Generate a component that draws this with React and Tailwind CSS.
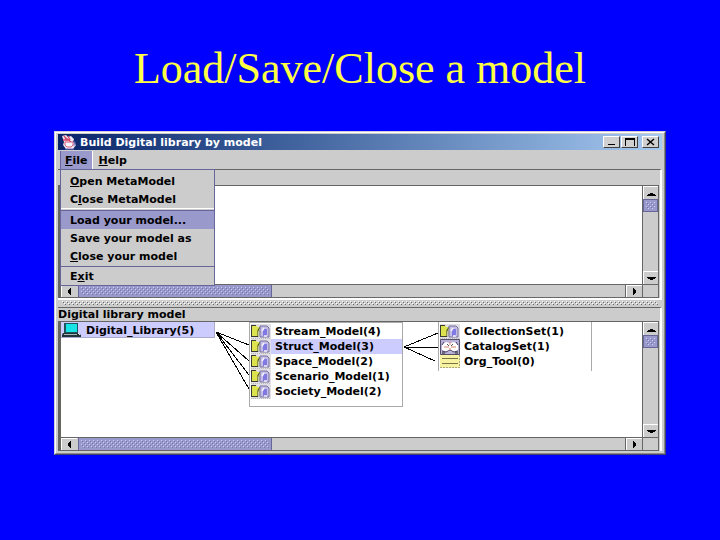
import React, { useState } from 'react';

const menuGroups = [
  [
    { id: 'open-meta', before: '', key: 'O', after: 'pen MetaModel' },
    { id: 'close-meta', before: 'C', key: 'l', after: 'ose MetaModel' },
  ],
  [
    { id: 'load', before: 'Load your model...', key: '', after: '' },
    { id: 'save', before: 'Save your model as', key: '', after: '' },
    { id: 'close', before: '', key: 'C', after: 'lose your model' },
  ],
  [{ id: 'exit', before: 'E', key: 'x', after: 'it' }],
];

const models = ['Stream_Model(4)', 'Struct_Model(3)', 'Space_Model(2)', 'Scenario_Model(1)', 'Society_Model(2)'];

const parts = [
  { name: 'CollectionSet(1)', icon: 'folder' },
  { name: 'CatalogSet(1)', icon: 'catalog' },
  { name: 'Org_Tool(0)', icon: 'note' },
];

const arrows = {
  up: 'M0 7h9v-1h-1v-1h-2v-1h-3v1h-2v1h-1z',
  down: 'M0 3h9v1h-1v1h-2v1h-3v-1h-2v-1h-1z',
  left: 'M6 1v7h-1v-1h-1v-1h-1v-3h1v-1h1v-1z',
  right: 'M3 1v7h1v-1h1v-1h1v-3h-1v-1h-1v-1z',
};

const CupIcon = () => (
  <svg width="16" height="16" viewBox="0 0 16 16" className="shrink-0" aria-hidden="true">
    <path d="M1 2l4-1 2 2 3-1 3 3-1 3 3 3-3 4H5l-3-4 1-3z" fill="#ece6f2" />
    <path d="M3 2l3 4M7 2l2 4M2 6h7M5 4l5 4" stroke="#d7476a" strokeWidth="1.3" fill="none" />
    <path d="M4 8h8v3l-2 2H6l-2-2z" fill="#f7f7ff" stroke="#d85c78" />
    <path d="M12 8h2v3h-2M4 15h9" stroke="#7d78bd" fill="none" />
  </svg>
);

const ComputerIcon = () => (
  <svg width="20" height="14" viewBox="0 0 20 14" className="shrink-0" aria-hidden="true">
    <path d="M2 0h14v10H2z" fill="#20545c" />
    <path d="M4 1h11v8H4z" fill="#18e4e8" />
    <path d="M1 10h15l3 2v2H0v-2z" fill="#22333a" />
    <path d="M2 11.5h13" stroke="#a5b9bb" />
    <path d="M16 10l2 2" stroke="#eee" />
  </svg>
);

const FolderIcon = () => (
  <svg width="20" height="15" viewBox="0 0 20 15" className="shrink-0" aria-hidden="true">
    <path d="M0 0h20v15H0z" fill="#e2e0e4" />
    <path d="M0 12V2l1-1h4l1 2h3v4l-2 5z" fill="#dce34e" />
    <path d="M0 1.500h5M.5 2v10M0 12.500h7V6l3-4" stroke="#3a3a30" fill="none" />
    <path d="M7 8l3-3h2v7H7z" fill="#c8cba8" />
    <path d="M9 2h7l2 2v9H9z" fill="#c4bde6" stroke="#77709c" />
    <path d="M12 5h4v7h-4z" fill="#8179e2" />
    <path d="M11 7l2-3M13 12h3" stroke="#f4f2ff" strokeWidth="1.5" />
    <path d="M0 14.500h20" stroke="#bbb" strokeDasharray="1 1" />
  </svg>
);

const CatalogIcon = () => (
  <svg width="20" height="16" viewBox="0 0 20 16" className="shrink-0" aria-hidden="true">
    <path d="M0 0h20v16H0z" fill="#b9b1d8" />
    <path d="M.5.5h19v15H.5z" fill="none" stroke="#55506a" />
    <path d="M2 5l4-2 4 1 4-1 4 2v6l-4 2-4-1-4 1-4-2z" fill="#fff" />
    <path d="M2 6l2-3M16 3l2 3M2 12l4 1 4-2 4 2 4-1" stroke="#443b68" fill="none" />
    <path d="M4 8h5M11 8h5M10 3v3M10 9v2" stroke="#d9856b" />
    <path d="M7 5l2 2M13 5l-2 2" stroke="#555" />
    <path d="M2 14h3M15 14h3" stroke="#222" />
  </svg>
);

const NoteIcon = () => (
  <svg width="20" height="13" viewBox="0 0 20 13" className="shrink-0" aria-hidden="true">
    <path d="M0 0h20v13H0z" fill="#f6f2a0" />
    <path d="M2 3.500h16M2 8.500h16" stroke="#77734a" />
    <path d="M0 12.500h20M19.500 0v13" stroke="#aaa783" strokeDasharray="2 1" />
  </svg>
);

const icons = { folder: FolderIcon, catalog: CatalogIcon, note: NoteIcon };

const ScrollButton = ({ dir, size }) => (
  <button
    type="button"
    aria-label={`Scroll ${dir}`}
    className={`flex shrink-0 items-center justify-center border-t border-l border-white bg-[#cccccc] ${size}`}
  >
    <svg width="9" height="9" viewBox="0 0 9 9" shapeRendering="crispEdges" aria-hidden="true">
      <path d={arrows[dir]} />
    </svg>
  </button>
);

// Grip texture drawn on thumbs
const Grip = ({ id }) => (
  <svg className="block h-full w-full" shapeRendering="crispEdges" aria-hidden="true">
    <pattern id={id} width="4" height="4" patternUnits="userSpaceOnUse">
      <path d="M0 0h1v1H0zM2 2h1v1H2z" fill="#ccccff" />
      <path d="M1 1h1v1H1zM3 3h1v1H3z" fill="#7777aa" />
    </pattern>
    <rect width="100%" height="100%" fill={`url(#${id})`} />
  </svg>
);

const Divider = () => (
  <div className="border-t-2 border-white px-1 pt-px pb-0.5">
    <svg className="block h-1 w-full" shapeRendering="crispEdges" aria-hidden="true">
      <pattern id="divider" width="4" height="4" patternUnits="userSpaceOnUse">
        <path d="M0 0h1v1H0zM2 2h1v1H2z" fill="#ffffff" />
        <path d="M1 1h1v1H1zM3 3h1v1H3z" fill="#666666" />
      </pattern>
      <rect width="100%" height="100%" fill="url(#divider)" />
    </svg>
  </div>
);

// White canvas with the two scroll bars round it
const ScrollPane = ({ id, children, minHeight }) => (
  <div className="grid grid-cols-[minmax(0,1fr)_17px] border-l-3 border-[#666660] bg-[#cccccc]">
    <div className={`bg-white ${minHeight}`}>{children}</div>
    <div className="flex flex-col border-r border-l border-[#666666]">
      <ScrollButton dir="up" size="h-[13px]" />
      <div className="h-[13px] border border-[#666699] bg-[#9999cc] p-0.5">
        <Grip id={`${id}-v`} />
      </div>
      <div className="flex-1" />
      <ScrollButton dir="down" size="h-[13px]" />
    </div>
    <div className="flex h-[14px] border-y border-[#666666]">
      <ScrollButton dir="left" size="w-4" />
      <div className="ml-px w-1/3 border-r border-l border-[#666699] bg-[#9999cc] px-0.5 py-0.5">
        <Grip id={`${id}-h`} />
      </div>
      <div className="flex-1 border-r border-[#666666]" />
      <ScrollButton dir="right" size="w-4" />
    </div>
    <div className="border border-[#666666]" />
  </div>
);

const TreeRow = ({ icon, label, selected, onClick }) => {
  const Icon = icons[icon];
  return (
    <li className="flex h-[15px] items-center pl-px">
      <Icon />
      <button
        type="button"
        onClick={onClick}
        className={`h-full flex-1 pl-1 text-left ${selected ? 'bg-[#ccccff]' : ''}`}
      >
        {label}
      </button>
    </li>
  );
};

const titleButton =
  'flex h-3 w-[17px] items-center justify-center border border-t-white border-l-white border-r-[#404040] border-b-[#404040] bg-[#d0d0d0]';

const App = () => {
  const [menuOpen, setMenuOpen] = useState(true);
  const [activeItem, setActiveItem] = useState('load');
  const [selected, setSelected] = useState('Struct_Model(3)');

  return (
    <main className="min-h-screen bg-[#0000ff] px-[54px] pt-[45px] pb-10">
      <h1 className="text-center font-['Liberation_Serif',serif] text-[44px] leading-[48px] text-[#ffff44]">
        Load/Save/Close a model
      </h1>

      <div className="mt-[38px] border border-t-[#ccccdd] border-l-[#ccccdd] border-r-[#444466] border-b-[#444466] font-['DejaVu_Sans',sans-serif] text-[11px] leading-[15px] font-bold text-black">
        <div className="border border-t-white border-l-white border-r-[#888888] border-b-[#888888] bg-[#cccccc] px-0.5 pt-px pb-0.5">
          {/* Title bar */}
          <header className="flex h-4 items-center bg-linear-to-r from-[#0a246a] to-[#a6caf0] pr-[3px] pl-[3px] text-white">
            <CupIcon />
            <span className="flex-1 pl-[3px]">Build Digital library by model</span>
            <button type="button" aria-label="Minimize" className={titleButton}>
              <svg width="10" height="8" shapeRendering="crispEdges"><path d="M1 6h7v1H1z" /></svg>
            </button>
            <button type="button" aria-label="Maximize" className={`ml-px ${titleButton}`}>
              <svg width="10" height="8" shapeRendering="crispEdges"><path d="M0 0h10v8H9V2H1v6H0z" /></svg>
            </button>
            <button type="button" aria-label="Close" className={`ml-1 ${titleButton}`}>
              <svg width="10" height="8"><path d="M1 1l7 6M8 1L1 7" stroke="black" strokeWidth="1.500" /></svg>
            </button>
          </header>

          {/* Menu bar */}
          <nav className="relative flex h-[19px] pt-px pl-0.5">
            <button
              type="button"
              onClick={() => setMenuOpen(!menuOpen)}
              className={`border-r border-l border-l-[#666699] border-r-white px-1 ${menuOpen ? 'bg-[#9999cc]' : ''}`}
            >
              <u>F</u>ile
            </button>
            <button type="button" className="px-1.5">
              <u>H</u>elp
            </button>

            {menuOpen && (
              <div className="absolute top-full left-[2px] z-10 w-[155px] border border-[#666699] bg-[#cccccc] pt-0.5">
                {menuGroups.map((group, i) => (
                  <div key={group[0].id} className={i > 0 ? 'mt-px border-t border-[#666699]' : 'border-b border-white'}>
                    {group.map(item => (
                      <button
                        key={item.id}
                        type="button"
                        onMouseEnter={() => setActiveItem(item.id)}
                        className={`block h-[18px] w-full pl-[9px] text-left ${
                          activeItem === item.id ? 'bg-[#9999cc]' : ''
                        }`}
                      >
                        {item.before}
                        <u>{item.key}</u>
                        {item.after}
                      </button>
                    ))}
                  </div>
                ))}
              </div>
            )}
          </nav>

          {/* Meta model pane */}
          <section className="border-t border-r-2 border-t-[#666666] border-r-white pr-px">
            <div className="h-4 border-b border-[#666666]" />
            <ScrollPane id="meta" minHeight="min-h-[98px]" />
          </section>

          <Divider />

          {/* Digital library pane */}
          <section className="border-t border-r-2 border-t-[#666666] border-r-white pr-px">
            <h2 className="h-[14px] border-b border-[#666666] leading-[14px]">Digital library model</h2>
            <ScrollPane id="library" minHeight="min-h-[115px]">
              <div className="flex items-start">
                <div className="flex h-4 w-[154px] items-center border-r border-b border-[#aaaacc] bg-[#ccccff] pl-px">
                  <ComputerIcon />
                  <span className="pt-0.5 pl-1">Digital_Library(5)</span>
                </div>
                <svg width="34" height="84" viewBox="0 0 34 84" shapeRendering="crispEdges" aria-hidden="true">
                  <path d="M1 10L34 23M1 10L34 39M1 10L34 53M1 10L34 67" stroke="black" fill="none" />
                </svg>
                <ul className="w-[154px] border border-[#aaaaaa] pt-px pb-[7px]">
                  {models.map(name => (
                    <TreeRow
                      key={name}
                      icon="folder"
                      label={name}
                      selected={selected === name}
                      onClick={() => setSelected(name)}
                    />
                  ))}
                </ul>
                <svg width="35" height="50" viewBox="0 0 35 50" shapeRendering="crispEdges" aria-hidden="true">
                  <path d="M1 25L35 11M1 25H35M1 25L32 39" stroke="black" fill="none" />
                </svg>
                <ul className="w-[154px] border-r border-l border-[#aaaaaa] pt-0.5 pb-0.5">
                  {parts.map(part => (
                    <TreeRow
                      key={part.name}
                      icon={part.icon}
                      label={part.name}
                      selected={selected === part.name}
                      onClick={() => setSelected(part.name)}
                    />
                  ))}
                </ul>
              </div>
            </ScrollPane>
          </section>
        </div>
      </div>
    </main>
  );
};

export default App;
